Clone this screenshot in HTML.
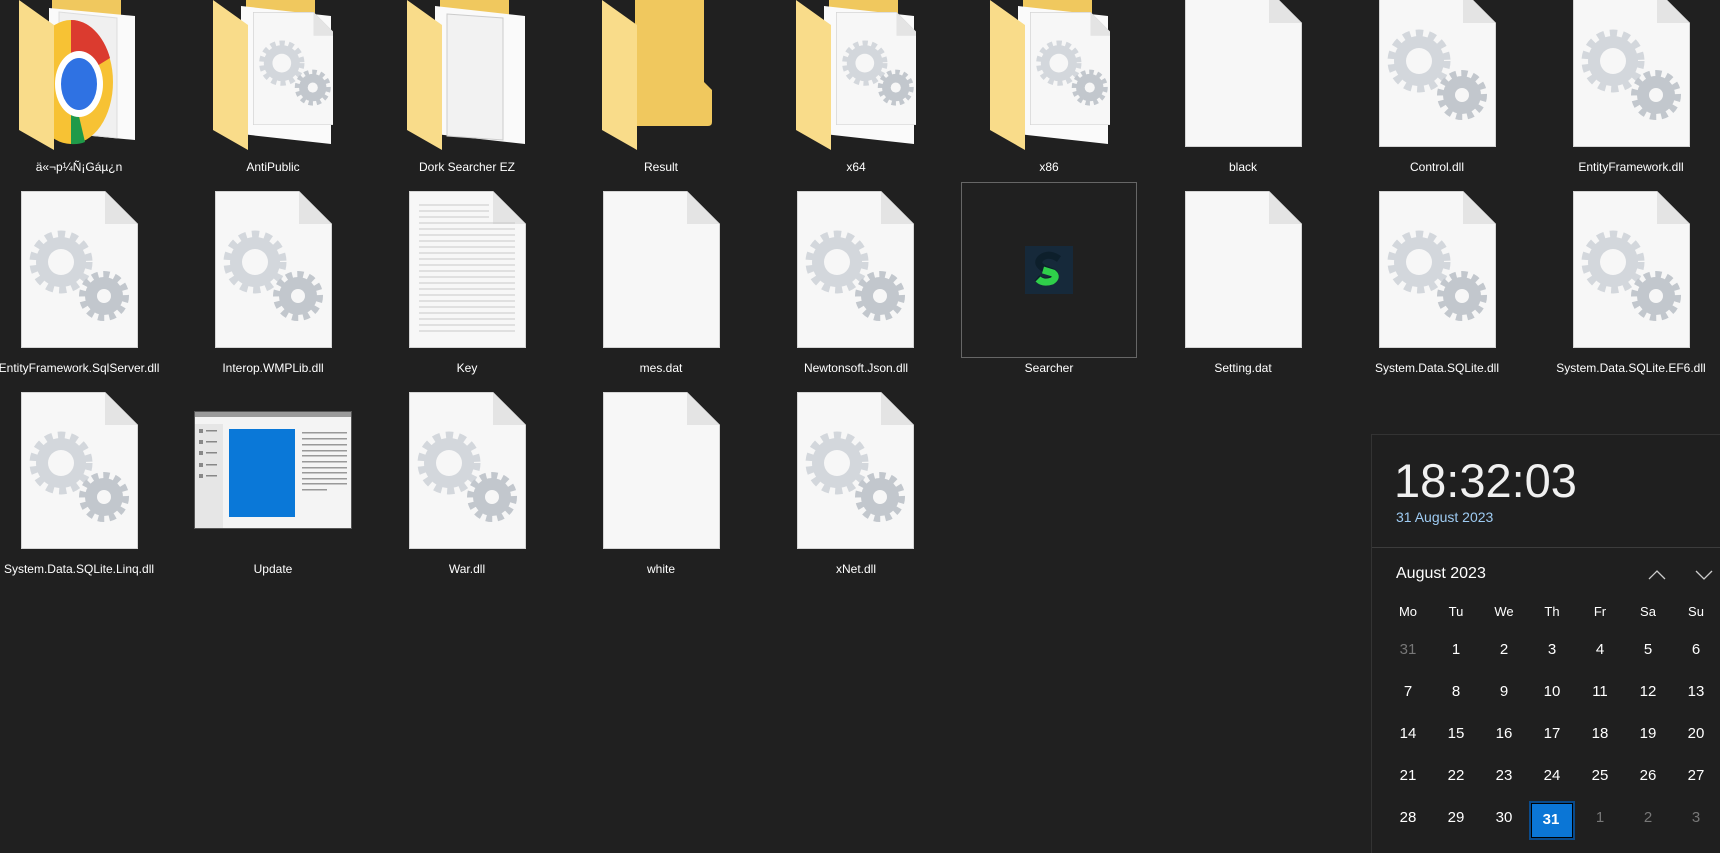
<!DOCTYPE html>
<html><head><meta charset="utf-8">
<style>
html,body{margin:0;padding:0;width:1720px;height:852px;overflow:hidden;background:#202020;font-family:"Segoe UI","Liberation Sans","Noto Sans CJK JP",sans-serif;}
.i{position:absolute;}
.l{position:absolute;width:194px;margin-left:-97px;text-align:center;color:#fff;font-size:12px;white-space:nowrap;}
#cal{position:absolute;left:1371px;top:434px;width:349px;height:418px;background:#1f1f1f;border-left:1px solid #333;border-top:1px solid #333;color:#fff;}
.d{position:absolute;width:40px;margin-left:-20px;text-align:center;font-size:15px;color:#fff;}
.d.g{color:#777;}
</style></head><body>
<svg width="0" height="0" style="position:absolute">
<defs>
<symbol id="pg" viewBox="0 0 117 157"><path d="M0.5 0.5H84L116.5 33V156.5H0.5Z" fill="#f7f7f7" stroke="#d5d5d5"/><path d="M84 0.5V33H116.5Z" fill="#e4e4e4"/></symbol>
<symbol id="gr" viewBox="0 0 117 157">
<circle cx="40" cy="71" r="27" fill="none" stroke="#d3d7dc" stroke-width="9" stroke-dasharray="7 5.4"/>
<circle cx="40" cy="71" r="25" fill="#d3d7dc"/><circle cx="40" cy="71" r="13" fill="#f7f7f7"/>
<circle cx="83" cy="105" r="21" fill="none" stroke="#c2c7cd" stroke-width="8" stroke-dasharray="6 4.9"/>
<circle cx="83" cy="105" r="19" fill="#c2c7cd"/><circle cx="83" cy="105" r="7" fill="#f7f7f7"/>
</symbol>
<symbol id="fb" viewBox="0 0 120 150"><path d="M33 0H102V82L110 90V122Q110 126 106 126H33Z" fill="#f0c85e"/></symbol>
<symbol id="ff" viewBox="0 0 120 150"><path d="M0 0L35 25V150L0 130Z" fill="#f9dc8a"/></symbol>
</defs></svg>

<svg class="i" style="left:19px;top:0" width="120" height="150" viewBox="0 0 120 150"><use href="#fb"/><path d="M30 8L116 16V140L30 132Z" fill="#fafafa"/><path d="M40 12L98 18V138L40 132Z" fill="#f0f0f0" stroke="#ddd"/>
<clipPath id="cc"><rect x="33" y="0" width="80" height="150"/></clipPath>
<g clip-path="url(#cc)"><ellipse cx="52" cy="82" rx="42" ry="62" fill="#f7c234"/><path d="M52 20 A42 62 0 0 1 91 58 L52 82Z" fill="#db3b2f"/><path d="M52 82 L66 142 A42 62 0 0 1 52 144Z" fill="#1f9a49"/><ellipse cx="60" cy="84" rx="24" ry="33" fill="#fff"/><ellipse cx="60" cy="84" rx="18" ry="26" fill="#2f72e3"/></g>
<use href="#ff"/></svg>
<div class="l" style="left:79px;top:160px">ä«¬p¼Ñ¡Gáµ¿n</div>

<svg class="i" style="left:213px;top:0" width="120" height="150" viewBox="0 0 120 150"><use href="#fb"/><path d="M28 6L118 16V144L28 134Z" fill="#fafafa"/><g transform="translate(40,12) scale(0.72)"><use href="#pg" width="117" height="157"/><use href="#gr" width="117" height="157"/></g><use href="#ff"/></svg>
<div class="l" style="left:273px;top:160px">AntiPublic</div>

<svg class="i" style="left:407px;top:0" width="120" height="150" viewBox="0 0 120 150"><use href="#fb"/><path d="M28 6L118 16V144L28 134Z" fill="#fafafa"/><path d="M40 14L96 18V140L40 136Z" fill="#f2f2f2" stroke="#ccc"/><use href="#ff"/></svg>
<div class="l" style="left:467px;top:160px">Dork Searcher EZ</div>

<svg class="i" style="left:602px;top:0" width="120" height="150" viewBox="0 0 120 150"><use href="#fb"/><use href="#ff"/></svg>
<div class="l" style="left:661px;top:160px">Result</div>

<svg class="i" style="left:796px;top:0" width="120" height="150" viewBox="0 0 120 150"><use href="#fb"/><path d="M28 6L118 16V144L28 134Z" fill="#fafafa"/><g transform="translate(40,12) scale(0.72)"><use href="#pg" width="117" height="157"/><use href="#gr" width="117" height="157"/></g><use href="#ff"/></svg>
<div class="l" style="left:856px;top:160px">x64</div>

<svg class="i" style="left:990px;top:0" width="120" height="150" viewBox="0 0 120 150"><use href="#fb"/><path d="M28 6L118 16V144L28 134Z" fill="#fafafa"/><g transform="translate(40,12) scale(0.72)"><use href="#pg" width="117" height="157"/><use href="#gr" width="117" height="157"/></g><use href="#ff"/></svg>
<div class="l" style="left:1049px;top:160px">x86</div>

<svg class="i" style="left:1185px;top:-10px" width="117" height="157"><use href="#pg"/></svg>
<div class="l" style="left:1243px;top:160px">black</div>
<svg class="i" style="left:1379px;top:-10px" width="117" height="157"><use href="#pg"/><use href="#gr"/></svg>
<div class="l" style="left:1437px;top:160px">Control.dll</div>
<svg class="i" style="left:1573px;top:-10px" width="117" height="157"><use href="#pg"/><use href="#gr"/></svg>
<div class="l" style="left:1631px;top:160px">EntityFramework.dll</div>

<svg class="i" style="left:21px;top:191px" width="117" height="157"><use href="#pg"/><use href="#gr"/></svg>
<div class="l" style="left:79px;top:361px">EntityFramework.SqlServer.dll</div>
<svg class="i" style="left:215px;top:191px" width="117" height="157"><use href="#pg"/><use href="#gr"/></svg>
<div class="l" style="left:273px;top:361px">Interop.WMPLib.dll</div>
<svg class="i" style="left:409px;top:191px" width="117" height="157"><use href="#pg"/>
<g stroke="#c8c8c8" stroke-width="1"><path d="M10 14H80M10 20H80M10 26H80M10 32H106M10 38H106M10 44H106M10 50H106M10 56H106M10 62H106M10 68H106M10 74H106M10 80H106M10 86H106M10 92H106M10 98H106M10 104H106M10 110H106M10 116H106M10 122H106M10 128H106M10 134H106M10 140H106"/></g></svg>
<div class="l" style="left:467px;top:361px">Key</div>
<svg class="i" style="left:603px;top:191px" width="117" height="157"><use href="#pg"/></svg>
<div class="l" style="left:661px;top:361px">mes.dat</div>
<svg class="i" style="left:797px;top:191px" width="117" height="157"><use href="#pg"/><use href="#gr"/></svg>
<div class="l" style="left:856px;top:361px">Newtonsoft.Json.dll</div>
<div class="i" style="left:961px;top:182px;width:174px;height:174px;border:1px solid #666;background:#202020"></div>
<svg class="i" style="left:1025px;top:246px" width="48" height="48" viewBox="0 0 48 48"><rect width="48" height="48" fill="#16293a"/><path d="M34 13Q24 6 16 12Q10 18 20 23L28 26Q32 30 26 34Q18 37 12 32" fill="none" stroke="#0d1f2b" stroke-width="7"/><path d="M18 24L28 27Q33 31 27 35Q18 38 13 33" fill="none" stroke="#2fcf4a" stroke-width="7"/></svg>
<div class="l" style="left:1049px;top:361px">Searcher</div>
<svg class="i" style="left:1185px;top:191px" width="117" height="157"><use href="#pg"/></svg>
<div class="l" style="left:1243px;top:361px">Setting.dat</div>
<svg class="i" style="left:1379px;top:191px" width="117" height="157"><use href="#pg"/><use href="#gr"/></svg>
<div class="l" style="left:1437px;top:361px">System.Data.SQLite.dll</div>
<svg class="i" style="left:1573px;top:191px" width="117" height="157"><use href="#pg"/><use href="#gr"/></svg>
<div class="l" style="left:1631px;top:361px">System.Data.SQLite.EF6.dll</div>

<svg class="i" style="left:21px;top:392px" width="117" height="157"><use href="#pg"/><use href="#gr"/></svg>
<div class="l" style="left:79px;top:562px">System.Data.SQLite.Linq.dll</div>
<svg class="i" style="left:194px;top:411px" width="158" height="118" viewBox="0 0 158 118"><rect width="158" height="118" fill="#555"/><rect x="1" y="1" width="156" height="116" fill="#f4f4f4"/><rect x="1" y="1" width="156" height="5" fill="#9a9a9a"/><rect x="1" y="13" width="28" height="104" fill="#e6e6e6"/><g fill="#888"><rect x="5" y="18" width="4" height="4"/><rect x="5" y="29" width="4" height="4"/><rect x="5" y="40" width="4" height="4"/><rect x="5" y="52" width="4" height="4"/><rect x="5" y="63" width="4" height="4"/><rect x="12" y="19" width="11" height="1.5"/><rect x="12" y="30" width="11" height="1.5"/><rect x="12" y="41" width="11" height="1.5"/><rect x="12" y="53" width="11" height="1.5"/><rect x="12" y="64" width="11" height="1.5"/></g><rect x="35" y="18" width="66" height="88" fill="#0a78d8"/><g fill="#999"><rect x="108" y="21" width="45" height="1.5"/><rect x="108" y="27" width="45" height="1.5"/><rect x="108" y="33" width="45" height="1.5"/><rect x="108" y="39" width="45" height="1.5"/><rect x="108" y="44" width="45" height="1.5"/><rect x="108" y="50" width="45" height="1.5"/><rect x="108" y="56" width="45" height="1.5"/><rect x="108" y="61" width="45" height="1.5"/><rect x="108" y="67" width="45" height="1.5"/><rect x="108" y="72" width="45" height="1.5"/><rect x="108" y="78" width="25" height="1.5"/></g></svg>
<div class="l" style="left:273px;top:562px">Update</div>
<svg class="i" style="left:409px;top:392px" width="117" height="157"><use href="#pg"/><use href="#gr"/></svg>
<div class="l" style="left:467px;top:562px">War.dll</div>
<svg class="i" style="left:603px;top:392px" width="117" height="157"><use href="#pg"/></svg>
<div class="l" style="left:661px;top:562px">white</div>
<svg class="i" style="left:797px;top:392px" width="117" height="157"><use href="#pg"/><use href="#gr"/></svg>
<div class="l" style="left:856px;top:562px">xNet.dll</div>

<div id="cal">
<div style="position:absolute;left:22px;top:18px;font-size:47px;font-weight:300;color:#f0f0f0">18:32:03</div>
<div style="position:absolute;left:24px;top:74px;font-size:14px;color:#9ecbf2">31 August 2023</div>
<div style="position:absolute;left:0;top:112px;width:349px;height:1px;background:#3c3c3c"></div>
<div style="position:absolute;left:24px;top:130px;font-size:16px">August 2023</div>
<svg style="position:absolute;left:275px;top:133px" width="20" height="14"><path d="M2 11L10 3L18 11" fill="none" stroke="#ccc" stroke-width="1.3"/></svg>
<svg style="position:absolute;left:322px;top:133px" width="20" height="14"><path d="M2 3L10 11L18 3" fill="none" stroke="#ccc" stroke-width="1.3"/></svg>
<div style="position:absolute;left:157px;top:366px;width:42px;height:35px;border:2px solid #0a4a8a;background:#0b76d6;box-shadow:inset 0 0 0 1px #000"></div>
<div style="position:absolute;left:155px;top:376px;width:48px;text-align:center;font-size:15px;font-weight:bold">31</div>
</div>
<div style="position:absolute;left:1371px;top:0;width:349px">
<div class="d" style="left:37px;top:604px;font-size:13px">Mo</div><div class="d" style="left:85px;top:604px;font-size:13px">Tu</div><div class="d" style="left:133px;top:604px;font-size:13px">We</div><div class="d" style="left:181px;top:604px;font-size:13px">Th</div><div class="d" style="left:229px;top:604px;font-size:13px">Fr</div><div class="d" style="left:277px;top:604px;font-size:13px">Sa</div><div class="d" style="left:325px;top:604px;font-size:13px">Su</div>
<div class="d g" style="left:37px;top:641px">31</div><div class="d" style="left:85px;top:641px">1</div><div class="d" style="left:133px;top:641px">2</div><div class="d" style="left:181px;top:641px">3</div><div class="d" style="left:229px;top:641px">4</div><div class="d" style="left:277px;top:641px">5</div><div class="d" style="left:325px;top:641px">6</div>
<div class="d" style="left:37px;top:683px">7</div><div class="d" style="left:85px;top:683px">8</div><div class="d" style="left:133px;top:683px">9</div><div class="d" style="left:181px;top:683px">10</div><div class="d" style="left:229px;top:683px">11</div><div class="d" style="left:277px;top:683px">12</div><div class="d" style="left:325px;top:683px">13</div>
<div class="d" style="left:37px;top:725px">14</div><div class="d" style="left:85px;top:725px">15</div><div class="d" style="left:133px;top:725px">16</div><div class="d" style="left:181px;top:725px">17</div><div class="d" style="left:229px;top:725px">18</div><div class="d" style="left:277px;top:725px">19</div><div class="d" style="left:325px;top:725px">20</div>
<div class="d" style="left:37px;top:767px">21</div><div class="d" style="left:85px;top:767px">22</div><div class="d" style="left:133px;top:767px">23</div><div class="d" style="left:181px;top:767px">24</div><div class="d" style="left:229px;top:767px">25</div><div class="d" style="left:277px;top:767px">26</div><div class="d" style="left:325px;top:767px">27</div>
<div class="d" style="left:37px;top:809px">28</div><div class="d" style="left:85px;top:809px">29</div><div class="d" style="left:133px;top:809px">30</div><div class="d g" style="left:229px;top:809px">1</div><div class="d g" style="left:277px;top:809px">2</div><div class="d g" style="left:325px;top:809px">3</div>
</div>
</body></html>
